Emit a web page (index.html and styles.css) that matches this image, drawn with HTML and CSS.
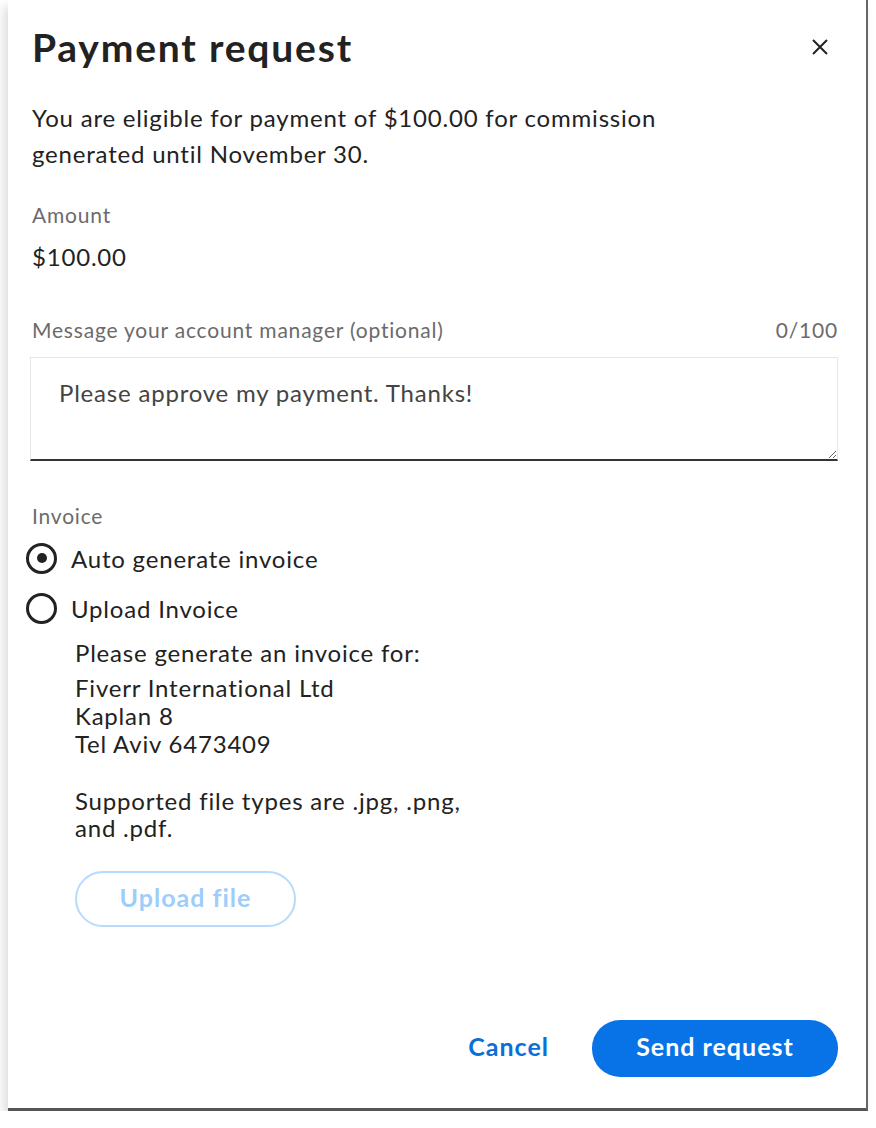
FILE: index.html
```html
<!DOCTYPE html>
<html lang="en">
<head>
  <meta charset="UTF-8">
  <title>Payment request</title>
  <link rel="stylesheet" href="styles.css">
</head>
<body>

<div class="dialog">
  <div class="dialog-header">
    <h1 class="title">Payment request</h1>
    <button class="close" aria-label="Close">
      <svg width="16" height="16" viewBox="0 0 16 16">
        <path d="M1 1 L15 15 M15 1 L1 15" stroke="#222" stroke-width="2" fill="none"/>
      </svg>
    </button>
  </div>

  <p class="intro">You are eligible for payment of $100.00 for commission generated until November 30.</p>

  <div class="label amount-label">Amount</div>
  <div class="amount">$100.00</div>

  <div class="label message-row">
    <span>Message your account manager (optional)</span>
    <span>0/100</span>
  </div>
  <textarea class="message">Please approve my payment. Thanks!</textarea>

  <div class="label invoice-label">Invoice</div>
  <div class="radio-row first">
    <span class="radio checked"></span>
    <span>Auto generate invoice</span>
  </div>
  <div class="radio-row">
    <span class="radio"></span>
    <span>Upload Invoice</span>
  </div>

  <div class="upload-info">
    <div class="line">Please generate an invoice for:</div>
    <div class="address">
      Fiverr International Ltd<br>
      Kaplan 8<br>
      Tel Aviv 6473409
    </div>
    <p class="types">Supported file types are .jpg, .png, and .pdf.</p>
    <button class="upload" disabled>Upload file</button>
  </div>

  <div class="footer">
    <button class="cancel">Cancel</button>
    <button class="send">Send request</button>
  </div>
</div>

</body>
</html>
```

FILE: styles.css
```css
body {
  margin: 0;
  background-color: #fff;
  font-family: Lato, "Noto Sans", sans-serif;
  font-size: 24px;
  letter-spacing: 0.8px;
  color: #222;
}

.dialog {
  margin-left: 8px;
  width: 860px;
  box-sizing: border-box;
  padding: 27px 28px 31px 22px;
  background-color: #fff;
  border-right: 2px solid #666;
  border-bottom: 3px solid #555;
  box-shadow: -4px 6px 10px rgba(0, 0, 0, 0.14);
}

.dialog-header {
  display: flex;
  justify-content: space-between;
  align-items: center;
  height: 40px;
}

.title {
  margin: 0 0 0 2px;
  font-size: 39px;
  line-height: 40px;
  font-weight: 700;
  letter-spacing: 1.8px;
}

.close {
  border: none;
  background: none;
  padding: 0;
  margin-right: 10px;
  width: 16px;
  height: 16px;
  display: flex;
  cursor: pointer;
}

.intro {
  margin: 33px 0 0 2px;
  max-width: 660px;
  line-height: 36px;
}

.label {
  font-size: 21px;
  line-height: 24px;
  color: #6b6b6b;
  margin-left: 2px;
}

.amount-label {
  margin-top: 31px;
}

.amount {
  margin: 15px 0 0 2px;
  line-height: 30px;
}

.message-row {
  margin-top: 46px;
  display: flex;
  justify-content: space-between;
}

.message {
  display: block;
  margin-top: 15px;
  width: 100%;
  height: 104px;
  box-sizing: border-box;
  padding: 20px 28px;
  border: 1px solid #e6e6e6;
  border-bottom: 2px solid #333;
  border-radius: 0;
  font-family: Lato, "Noto Sans", sans-serif;
  font-size: 24px;
  letter-spacing: 0.8px;
  line-height: 30px;
  color: #444;
  outline: none;
}

.invoice-label {
  margin-top: 43px;
}

.radio-row {
  display: flex;
  align-items: center;
  gap: 14px;
  height: 40px;
  margin-top: 10px;
  margin-left: -4px;
}

.radio {
  width: 31px;
  height: 31px;
  box-sizing: border-box;
  border: 3px solid #222;
  border-radius: 50%;
  display: flex;
  align-items: center;
  justify-content: center;
}

.radio.checked::after {
  content: "";
  width: 10px;
  height: 10px;
  border-radius: 50%;
  background-color: #222;
}

.upload-info {
  margin: 11px 0 0 45px;
}

.line {
  line-height: 28px;
}

.address {
  margin-top: 7px;
  line-height: 28px;
}

.types {
  margin: 29px 0 0;
  max-width: 400px;
  line-height: 27px;
}

.upload {
  margin-top: 30px;
  width: 221px;
  height: 56px;
  padding: 0 0 5px;
  border: 2px solid #b5dbff;
  border-radius: 28px;
  background: #fff;
  color: #9fcdfb;
  font-family: Lato, "Noto Sans", sans-serif;
  font-size: 25px;
  letter-spacing: 1px;
  font-weight: 700;
}

.footer {
  margin-top: 93px;
  display: flex;
  justify-content: flex-end;
  align-items: center;
  gap: 43px;
}

.footer button {
  font-family: Lato, "Noto Sans", sans-serif;
  font-size: 25px;
  letter-spacing: 1px;
  font-weight: 700;
  border: none;
  cursor: pointer;
}

.cancel {
  background: none;
  padding: 0 0 5px;
  color: #0a6fd8;
}

.send {
  width: 246px;
  height: 57px;
  padding: 0 0 5px;
  border-radius: 28px;
  background-color: #0873e6;
  color: #fff;
}
```
